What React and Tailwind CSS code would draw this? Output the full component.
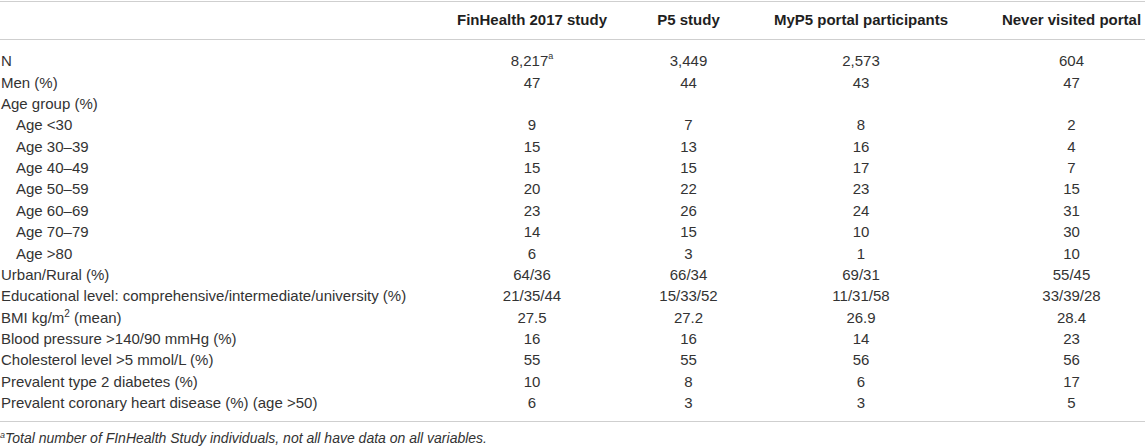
const columns = ['FinHealth 2017 study', 'P5 study', 'MyP5 portal participants', 'Never visited portal']

const rows = [
  { label: 'N', values: ['8,217', '3,449', '2,573', '604'], note: true },
  { label: 'Men (%)', values: ['47', '44', '43', '47'] },
  { label: 'Age group (%)', values: ['', '', '', ''] },
  { label: 'Age <30', values: ['9', '7', '8', '2'], sub: true },
  { label: 'Age 30–39', values: ['15', '13', '16', '4'], sub: true },
  { label: 'Age 40–49', values: ['15', '15', '17', '7'], sub: true },
  { label: 'Age 50–59', values: ['20', '22', '23', '15'], sub: true },
  { label: 'Age 60–69', values: ['23', '26', '24', '31'], sub: true },
  { label: 'Age 70–79', values: ['14', '15', '10', '30'], sub: true },
  { label: 'Age >80', values: ['6', '3', '1', '10'], sub: true },
  { label: 'Urban/Rural (%)', values: ['64/36', '66/34', '69/31', '55/45'] },
  { label: 'Educational level: comprehensive/intermediate/university (%)', values: ['21/35/44', '15/33/52', '11/31/58', '33/39/28'] },
  { label: 'BMI', values: ['27.5', '27.2', '26.9', '28.4'], bmi: true },
  { label: 'Blood pressure >140/90 mmHg (%)', values: ['16', '16', '14', '23'] },
  { label: 'Cholesterol level >5 mmol/L (%)', values: ['55', '55', '56', '56'] },
  { label: 'Prevalent type 2 diabetes (%)', values: ['10', '8', '6', '17'] },
  { label: 'Prevalent coronary heart disease (%) (age >50)', values: ['6', '3', '3', '5'] },
]

const grid = 'grid grid-cols-[432px_200px_113px_232px_1fr]'
const cell = ['text-center', 'text-center', 'text-center', 'pl-[23px] pr-[2px] text-center']

function Label({ row }) {
  if (row.bmi) {
    return (
      <span>
        BMI kg/m<sup className="-top-[6px] text-[10px]">2</sup> (mean)
      </span>
    )
  }
  return <span>{row.label}</span>
}

export default function App() {
  return (
    <div className="h-[446px] w-[1145px] overflow-hidden bg-white pt-px font-['Liberation_Sans',Arial,sans-serif] text-[15px] text-[#333]">
      <div className={`${grid} h-[39px] items-center border-y border-[#cfcfcf] font-bold text-[#1f1f1f]`}>
        <div />
        {columns.map((col, i) => (
          <div key={col} className={`whitespace-nowrap ${cell[i]}`}>
            {col}
          </div>
        ))}
      </div>

      <div className="border-b border-[#cfcfcf] pb-[8px] pt-[10px]">
        {rows.map((row) => (
          <div key={row.label} className={`${grid} h-[21.375px] items-center leading-none`}>
            <div className={`whitespace-nowrap ${row.sub ? 'pl-[16px]' : 'pl-[1px]'}`}>
              <Label row={row} />
            </div>
            {row.values.map((v, i) => (
              <div key={i} className={`whitespace-nowrap ${cell[i]}`}>
                {v}
                {row.note && i === 0 && <sup className="-top-[7px] text-[9px]">a</sup>}
              </div>
            ))}
          </div>
        ))}
      </div>

      <p className="mt-[8px] whitespace-nowrap text-[14px] italic leading-[16px] text-[#333]">
        <sup className="-top-[5px] text-[9px]">a</sup>Total number of FInHealth Study individuals, not all have data on all variables.
      </p>
    </div>
  )
}
